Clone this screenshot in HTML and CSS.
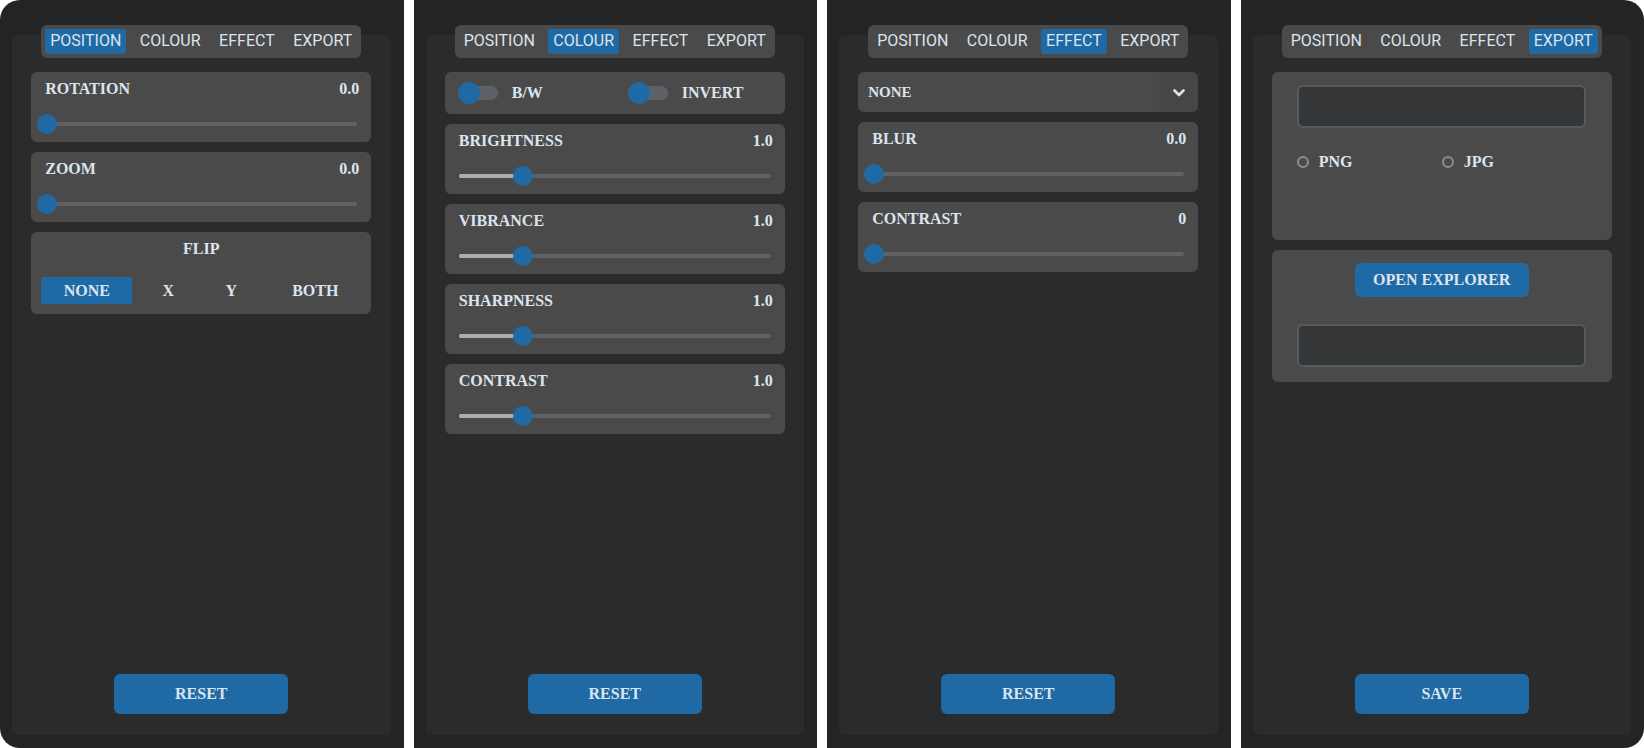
FILE: index.html
```html
<!DOCTYPE html>
<html>
<head>
<meta charset="utf-8">
<link rel="stylesheet" href="styles.css">
</head>
<body>
<div class="screens">

  <!-- POSITION -->
  <section class="window first">
    <nav class="tabs">
      <span class="tab active">POSITION</span><span class="tab">COLOUR</span><span class="tab">EFFECT</span><span class="tab">EXPORT</span>
    </nav>
    <div class="frame">
      <div class="card">
        <div class="card-head"><span>ROTATION</span><span>0.0</span></div>
        <div class="slider wide"><div class="track"><div class="fill" style="width:0px"></div></div><div class="thumb" style="left:0px"></div></div>
      </div>
      <div class="card">
        <div class="card-head"><span>ZOOM</span><span>0.0</span></div>
        <div class="slider wide"><div class="track"><div class="fill" style="width:0px"></div></div><div class="thumb" style="left:0px"></div></div>
      </div>
      <div class="card flip-card">
        <div class="flip-title">FLIP</div>
        <div class="flip-row">
          <span class="flip-btn active">NONE</span><span class="flip-btn">X</span><span class="flip-btn">Y</span><span class="flip-btn">BOTH</span>
        </div>
      </div>
      <button class="action">RESET</button>
    </div>
  </section>

  <!-- COLOUR -->
  <section class="window">
    <nav class="tabs">
      <span class="tab">POSITION</span><span class="tab active">COLOUR</span><span class="tab">EFFECT</span><span class="tab">EXPORT</span>
    </nav>
    <div class="frame">
      <div class="card switch-card">
        <div class="switch"><div class="switch-track"><div class="switch-thumb"></div></div><span class="switch-label">B/W</span></div>
        <div class="switch"><div class="switch-track"><div class="switch-thumb"></div></div><span class="switch-label">INVERT</span></div>
      </div>
      <div class="card">
        <div class="card-head"><span>BRIGHTNESS</span><span>1.0</span></div>
        <div class="slider"><div class="track"><div class="fill" style="width:64px"></div></div><div class="thumb" style="left:54px"></div></div>
      </div>
      <div class="card">
        <div class="card-head"><span>VIBRANCE</span><span>1.0</span></div>
        <div class="slider"><div class="track"><div class="fill" style="width:64px"></div></div><div class="thumb" style="left:54px"></div></div>
      </div>
      <div class="card">
        <div class="card-head"><span>SHARPNESS</span><span>1.0</span></div>
        <div class="slider"><div class="track"><div class="fill" style="width:64px"></div></div><div class="thumb" style="left:54px"></div></div>
      </div>
      <div class="card">
        <div class="card-head"><span>CONTRAST</span><span>1.0</span></div>
        <div class="slider"><div class="track"><div class="fill" style="width:64px"></div></div><div class="thumb" style="left:54px"></div></div>
      </div>
      <button class="action">RESET</button>
    </div>
  </section>

  <!-- EFFECT -->
  <section class="window">
    <nav class="tabs">
      <span class="tab">POSITION</span><span class="tab">COLOUR</span><span class="tab active">EFFECT</span><span class="tab">EXPORT</span>
    </nav>
    <div class="frame">
      <div class="dropdown">
        <span class="dropdown-value">NONE</span>
        <span class="dropdown-arrow">
          <svg width="12" height="8" viewBox="0 0 12 8"><polyline points="1.5,1.5 6,6 10.5,1.5" fill="none" stroke="#DCE4EE" stroke-width="2.6" stroke-linecap="round" stroke-linejoin="round"/></svg>
        </span>
      </div>
      <div class="card">
        <div class="card-head"><span>BLUR</span><span>0.0</span></div>
        <div class="slider wide"><div class="track"><div class="fill" style="width:0px"></div></div><div class="thumb" style="left:0px"></div></div>
      </div>
      <div class="card">
        <div class="card-head"><span>CONTRAST</span><span>0</span></div>
        <div class="slider wide"><div class="track"><div class="fill" style="width:0px"></div></div><div class="thumb" style="left:0px"></div></div>
      </div>
      <button class="action">RESET</button>
    </div>
  </section>

  <!-- EXPORT -->
  <section class="window last">
    <nav class="tabs">
      <span class="tab">POSITION</span><span class="tab">COLOUR</span><span class="tab">EFFECT</span><span class="tab active">EXPORT</span>
    </nav>
    <div class="frame">
      <div class="card export-card">
        <div class="entry"></div>
        <div class="radio-row">
          <label class="radio"><span class="radio-dot"></span><span>PNG</span></label>
          <label class="radio"><span class="radio-dot"></span><span>JPG</span></label>
        </div>
      </div>
      <div class="card explorer-card">
        <button class="small-btn">OPEN EXPLORER</button>
        <div class="entry"></div>
      </div>
      <button class="action">SAVE</button>
    </div>
  </section>

</div>
</body>
</html>
```
FILE: styles.css
```css
* { box-sizing: border-box; }

html, body {
  margin: 0;
  padding: 0;
  background: #ffffff;
}

.screens {
  display: flex;
  gap: 10px;
  width: 1644px;
  height: 748px;
}

.window {
  flex: 1;
  background: #242424;
  display: flex;
  flex-direction: column;
  padding: 25px 13px 13px 12px;
}

.window.first { border-radius: 20px 0 0 20px; }
.window.last { border-radius: 0 20px 20px 0; }

/* tab bar */
.tabs {
  position: relative;
  z-index: 1;
  align-self: center;
  width: 320px;
  height: 33px;
  padding: 4px;
  background: #4a4a4a;
  border-radius: 6px;
  display: flex;
  justify-content: space-between;
}

.tab {
  height: 25px;
  line-height: 24px;
  padding: 0 5px;
  border-radius: 3px;
  font-family: Roboto, "Liberation Sans", sans-serif;
  font-size: 16px;
  color: #DCE4EE;
  white-space: nowrap;
}

.tab.active { background: #1f6aa5; }

/* inner frame */
.frame {
  flex: 1;
  margin-top: -23px;
  padding: 37px 0 21px 0;
  background: #2b2b2b;
  border-radius: 6px;
  display: flex;
  flex-direction: column;
  align-items: center;
  gap: 10px;
}

/* stencil-like text */
.card, .dropdown, .action, .small-btn, .flip-btn, .switch-label, .radio {
  font-family: "Liberation Serif", "Times New Roman", serif;
  font-weight: bold;
  font-size: 16px;
  color: #DCE4EE;
}

.card {
  width: 340px;
  background: #4a4a4a;
  border-radius: 6px;
  padding: 7px 12px 8px 14px;
}

.card-head {
  display: flex;
  justify-content: space-between;
  height: 20px;
  line-height: 20px;
}

/* slider */
.slider {
  position: relative;
  height: 20px;
  margin-top: 15px;
  margin-right: 2px;
  display: flex;
  align-items: center;
}

.slider.wide { margin-left: -8px; }

.track {
  flex: 1;
  height: 4px;
  border-radius: 2px;
  background: #5e6266;
  display: flex;
}

.fill {
  height: 4px;
  border-radius: 2px;
  background: #aab0b5;
}

.thumb {
  position: absolute;
  top: 0;
  width: 20px;
  height: 20px;
  border-radius: 50%;
  background: #1f6aa5;
}

/* flip */
.flip-card { padding: 7px 0 10px 0; }

.flip-title {
  height: 20px;
  line-height: 20px;
  text-align: center;
}

.flip-row {
  margin: 18px 0 0 10px;
  display: grid;
  grid-template-columns: 91px 72px 54px 114px;
}

.flip-btn {
  height: 27px;
  line-height: 27px;
  text-align: center;
  border-radius: 3px;
}

.flip-btn.active { background: #1f6aa5; }

/* switches */
.switch-card {
  height: 42px;
  padding: 0 0 0 13px;
  display: grid;
  grid-template-columns: 170px 170px;
  align-items: center;
}

.switch {
  display: flex;
  align-items: center;
}

.switch-track {
  position: relative;
  width: 40px;
  height: 14px;
  border-radius: 7px;
  background: #5e6266;
}

.switch-thumb {
  position: absolute;
  left: 0;
  top: -4px;
  width: 22px;
  height: 22px;
  border-radius: 50%;
  background: #1f6aa5;
}

.switch-label {
  margin-left: 14px;
  line-height: 20px;
}

/* dropdown */
.dropdown {
  width: 340px;
  height: 40px;
  border-radius: 6px;
  overflow: hidden;
  display: flex;
  margin-bottom: 0;
  font-size: 15px;
}

.dropdown-value {
  flex: 1;
  background: #4a4a4a;
  padding-left: 10px;
  line-height: 40px;
}

.dropdown-arrow {
  width: 39px;
  background: #464646;
  display: flex;
  align-items: center;
  justify-content: center;
  padding-top: 1px;
}

/* export */
.export-card {
  height: 168px;
  padding: 13px 0 0 25px;
}

.entry {
  width: 289px;
  height: 43px;
  background: #343638;
  border: 2px solid #565b5e;
  border-radius: 6px;
}

.radio-row {
  margin-top: 24px;
  display: grid;
  grid-template-columns: 145px 145px;
}

.radio {
  display: flex;
  align-items: center;
  height: 20px;
}

.radio-dot {
  width: 12px;
  height: 12px;
  border-radius: 50%;
  border: 2px solid #8a8e92;
  margin-right: 10px;
}

.explorer-card {
  height: 132px;
  padding: 13px 0 0 0;
  display: flex;
  flex-direction: column;
  align-items: center;
}

.explorer-card .entry { margin-top: 27px; }

.small-btn {
  width: 174px;
  height: 34px;
  border: none;
  border-radius: 6px;
  background: #1f6aa5;
  padding: 0;
}

.action {
  margin-top: auto;
  width: 174px;
  height: 40px;
  border: none;
  border-radius: 6px;
  background: #1f6aa5;
  padding: 0;
}
```
